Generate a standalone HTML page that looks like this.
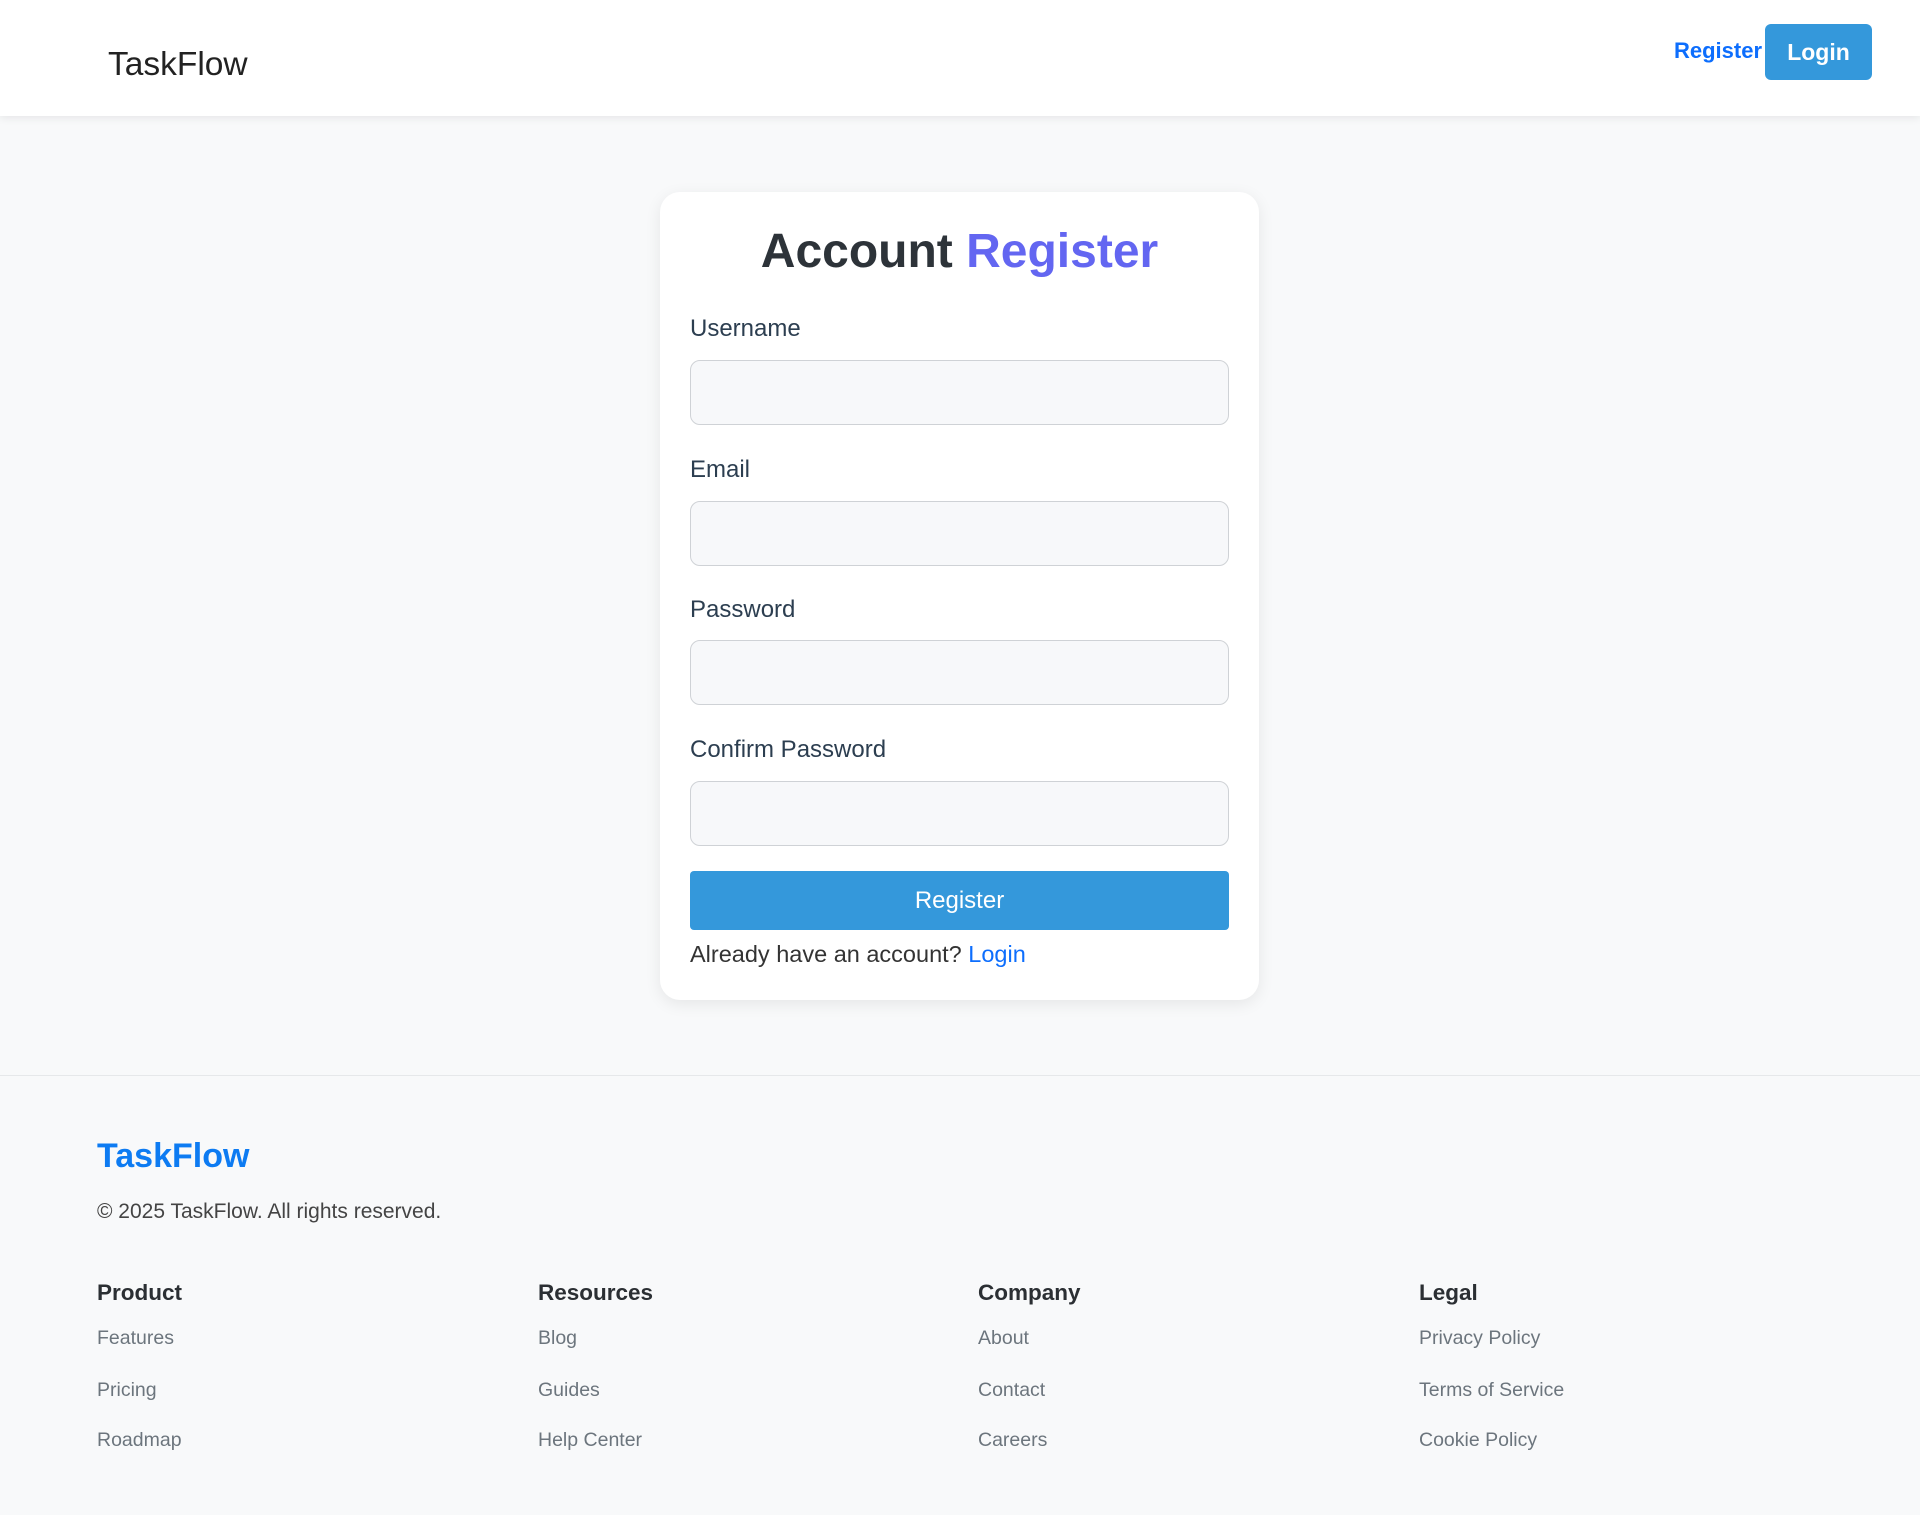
<!DOCTYPE html>
<html><head><meta charset="utf-8"><style>
*{margin:0;padding:0;box-sizing:border-box}
body{width:1920px;height:1515px;background:#f8f9fa;font-family:"Liberation Sans",sans-serif;position:relative;overflow:hidden;color:#333}
.abs{position:absolute;white-space:nowrap}
header{position:absolute;left:0;top:0;width:1920px;height:116px;background:#fff;box-shadow:0 2px 8px rgba(0,0,0,.08)}
.card{position:absolute;left:660px;top:192px;width:599px;height:808px;background:#fff;border-radius:20px;box-shadow:0 4px 16px rgba(0,0,0,.08)}
.lbl{position:absolute;left:690px;font-size:24px;color:#2c3e50;line-height:28px}
.inp{position:absolute;left:690px;width:539px;height:65px;background:#f7f8fa;border:1.5px solid #cfd2d6;border-radius:10px}
.fh{position:absolute;font-size:22.5px;font-weight:bold;color:#2b2f33;line-height:30px}
.fl{position:absolute;font-size:19.5px;color:#6c757d;line-height:26px}
</style></head><body>
<header>
<div class="abs" style="left:108px;top:43px;font-size:33.5px;color:#222;line-height:44px">TaskFlow</div>
<div class="abs" style="left:1674px;top:36px;font-size:22px;font-weight:bold;color:#0d6efd;line-height:30px">Register</div>
<div class="abs" style="left:1765px;top:24px;width:107px;height:56px;background:#3498db;border-radius:6px;color:#fff;font-size:23px;font-weight:bold;text-align:center;line-height:56px">Login</div>
</header>
<div class="card"></div>
<div class="abs" style="left:660px;width:599px;top:222px;text-align:center;font-size:48px;font-weight:bold;color:#2d3339;line-height:60px">Account <span style="color:#6366f1">Register</span></div>
<div class="lbl" style="top:315px">Username</div><div class="inp" style="top:360px"></div>
<div class="lbl" style="top:456px">Email</div><div class="inp" style="top:501px"></div>
<div class="lbl" style="top:596px">Password</div><div class="inp" style="top:640px"></div>
<div class="lbl" style="top:736px">Confirm Password</div><div class="inp" style="top:781px"></div>
<div class="abs" style="left:690px;top:871px;width:539px;height:59px;background:#3498db;border-radius:4px;color:#fff;font-size:24px;text-align:center;line-height:60px">Register</div>
<div class="abs" style="left:690px;top:939px;font-size:23.5px;color:#333;line-height:30px">Already have an account? <span style="color:#0d6efd">Login</span></div>
<div class="abs" style="left:0;top:1075px;width:1920px;height:1px;background:#e6e8ea"></div>
<div class="abs" style="left:97px;top:1134px;font-size:34px;font-weight:bold;color:#0d7bf2;line-height:44px">TaskFlow</div>
<div class="abs" style="left:97px;top:1199px;font-size:21px;color:#444;line-height:26px">© 2025 TaskFlow. All rights reserved.</div>
<div class="fh" style="left:97px;top:1278px">Product</div>
<div class="fl" style="left:97px;top:1325px">Features</div><div class="fl" style="left:97px;top:1377px">Pricing</div><div class="fl" style="left:97px;top:1427px">Roadmap</div>
<div class="fh" style="left:538px;top:1278px">Resources</div>
<div class="fl" style="left:538px;top:1325px">Blog</div><div class="fl" style="left:538px;top:1377px">Guides</div><div class="fl" style="left:538px;top:1427px">Help Center</div>
<div class="fh" style="left:978px;top:1278px">Company</div>
<div class="fl" style="left:978px;top:1325px">About</div><div class="fl" style="left:978px;top:1377px">Contact</div><div class="fl" style="left:978px;top:1427px">Careers</div>
<div class="fh" style="left:1419px;top:1278px">Legal</div>
<div class="fl" style="left:1419px;top:1325px">Privacy Policy</div><div class="fl" style="left:1419px;top:1377px">Terms of Service</div><div class="fl" style="left:1419px;top:1427px">Cookie Policy</div>
</body></html>
